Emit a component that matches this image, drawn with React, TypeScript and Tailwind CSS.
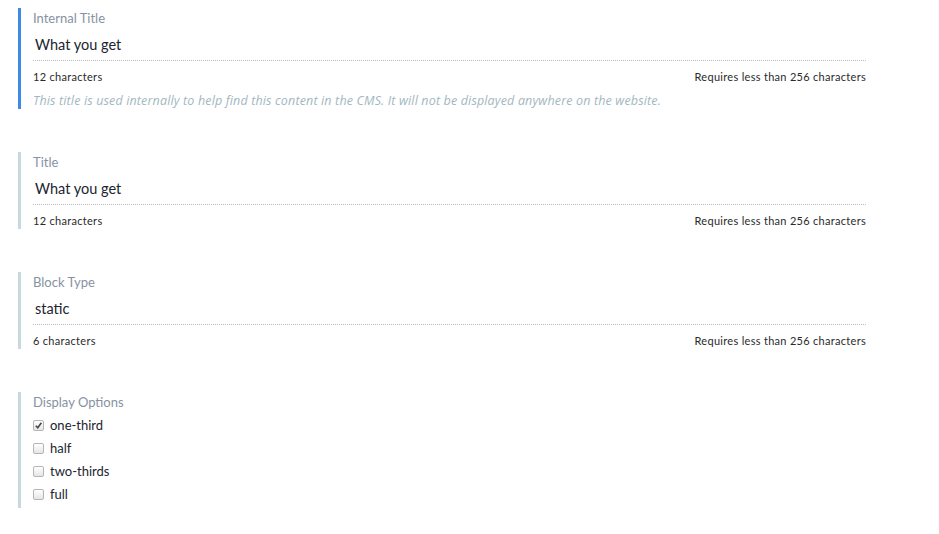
const font = { fontFamily: 'Lato, "Noto Sans", sans-serif' };

function TextField({
  label,
  value,
  help,
  active,
}: {
  label: string;
  value: string;
  help?: string;
  active?: boolean;
}) {
  return (
    <div
      className={`w-[848px] border-l-[3px] pl-[12px] ${
        active ? 'border-[#3d8be6]' : 'border-[#c6d9e0]'
      }`}
    >
      <div className="h-[20px] text-[13px] leading-[20px] text-[#8792a3]">{label}</div>
      <div className="mt-[7px] border-b border-dotted border-[#bcbcbc] pb-[5px] pl-[2px] text-[14.5px] leading-[20px] text-[#1c2430]">
        {value}
      </div>
      <div className="mt-[8px] flex justify-between text-[11px] leading-[16px] tracking-[0.3px] text-[#2a2a2a]">
        <span>{value.length} characters</span>
        <span>Requires less than 256 characters</span>
      </div>
      {help && (
        <div
          className="mt-[8px] text-[12.5px] italic leading-[16px] tracking-[0.15px] text-[#a2b7c1]"
          style={{ fontFamily: '"Open Sans", sans-serif' }}
        >
          {help}
        </div>
      )}
    </div>
  );
}

function Check({ checked }: { checked?: boolean }) {
  return (
    <span className="flex h-[11px] w-[11px] items-center justify-center rounded-[2px] border border-[#b5b5b5] bg-gradient-to-b from-white to-[#e6e6e6]">
      {checked && (
        <svg viewBox="0 0 10 10" className="h-[9px] w-[9px]">
          <path d="M2 5.2 L4.2 7.6 L8.2 2" fill="none" stroke="#4a4a4a" strokeWidth="1.8" />
        </svg>
      )}
    </span>
  );
}

export default function App() {
  const options = ['one-third', 'half', 'two-thirds', 'full'];
  return (
    <div className="min-h-screen bg-white pl-[18px] pt-[8px]" style={font}>
      <div className="flex flex-col gap-[43px]">
        <TextField
          active
          label="Internal Title"
          value="What you get"
          help="This title is used internally to help find this content in the CMS. It will not be displayed anywhere on the website."
        />
        <TextField label="Title" value="What you get" />
        <TextField label="Block Type" value="static" />
        <div className="w-[848px] border-l-[3px] border-[#c6d9e0] pb-[2px] pl-[12px]">
          <div className="h-[22px] text-[13px] leading-[20px] text-[#8792a3]">Display Options</div>
          {options.map((o, i) => (
            <div key={o} className="flex h-[23px] items-center gap-[6px] text-[13px] text-[#1c2430]">
              <Check checked={i === 0} />
              <span>{o}</span>
            </div>
          ))}
        </div>
      </div>
    </div>
  );
}
